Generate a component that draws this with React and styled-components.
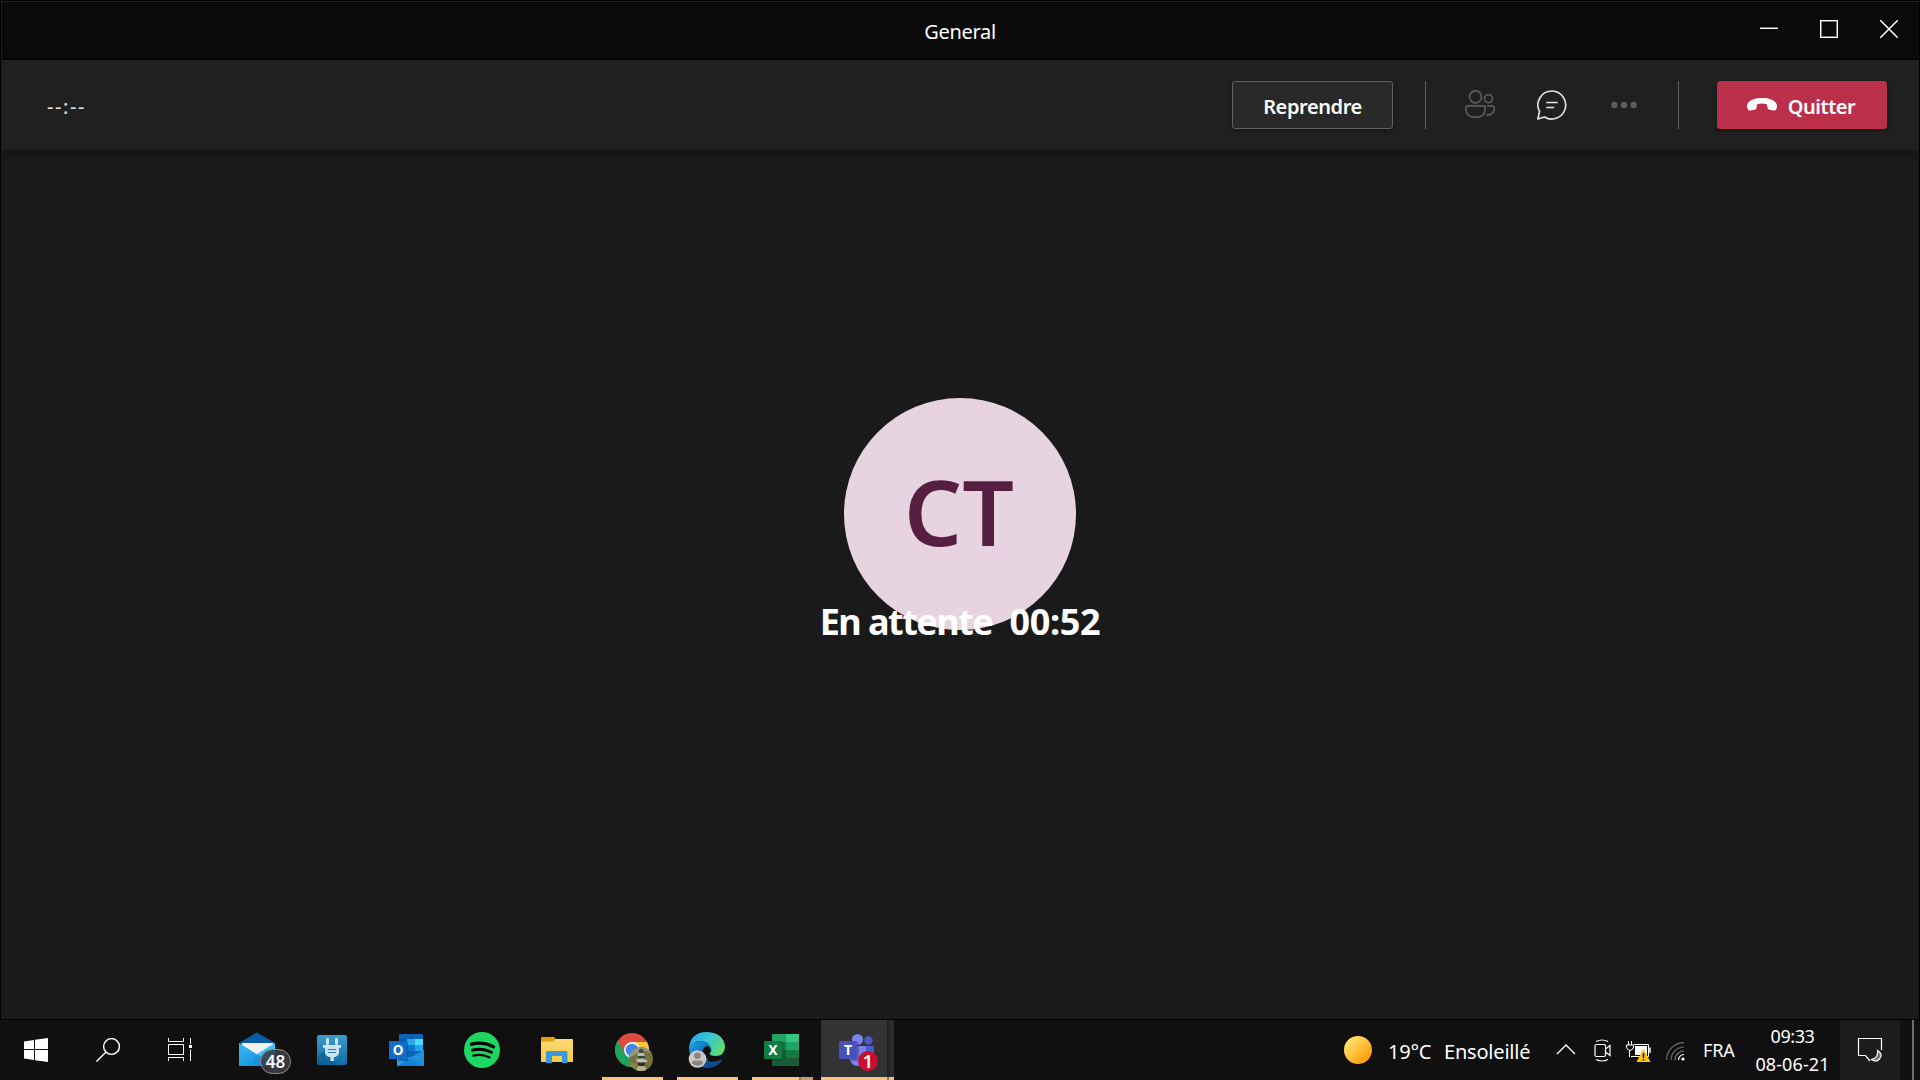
import React from "react";
import styled, { createGlobalStyle, css } from "styled-components";

const Global = createGlobalStyle`
  * { box-sizing: border-box; }
  html, body { margin: 0; background: #101010; overflow: hidden; }
  body { font-family: "Noto Sans", "Open Sans", sans-serif; color: #fff; }
  svg { display: block; flex: none; }
`;

const Desktop = styled.div`
  width: 1920px;
  height: 1080px;
  display: flex;
  flex-direction: column;
  overflow: hidden;
`;

const Window = styled.div`
  height: 1020px;
  display: flex;
  flex-direction: column;
  border: 1px solid #000;
  background: #1a1a1a;
`;

const Frame = styled.div`
  flex: 1;
  display: flex;
  flex-direction: column;
  border-top: 1px solid #232323;
  border-left: 1px solid #1c1c1c;
`;

const TitleBar = styled.header`
  height: 58px;
  flex: none;
  display: grid;
  grid-template-columns: 1fr auto 1fr;
  background: #0a0a0a;
  border-bottom: 1px solid #000;
`;

const Label = styled.span`
  display: block;
  white-space: pre;
  font-size: ${(p) => p.$size}px;
  font-weight: ${(p) => p.$weight || 400};
  letter-spacing: ${(p) => p.$track || 0}px;
  line-height: ${(p) => p.$line || 30}px;
  padding-top: ${(p) => p.$drop || 0}px;
  color: ${(p) => p.$color || "#fff"};
`;

const Title = styled.h1`
  grid-column: 2;
  margin: 0;
  padding: 15px 1px 0 0;
  font-weight: 400;
`;

const WindowControls = styled.div`
  display: flex;
  justify-content: flex-end;
`;

const ControlButton = styled.button`
  width: 60px;
  height: 54px;
  padding: 0;
  border: 0;
  background: none;
  color: #fff;
  display: flex;
  align-items: center;
  justify-content: center;
`;

const CallToolbar = styled.div`
  height: 90px;
  flex: none;
  display: flex;
  align-items: center;
  justify-content: space-between;
  padding: 0 32px 0 45px;
  background: #202020;
  box-shadow: 0 3px 8px rgba(0, 0, 0, 0.22);
`;

const Actions = styled.div`
  display: flex;
  align-items: center;
`;

const CallButton = styled.button`
  height: 48px;
  width: ${(p) => p.$width}px;
  display: flex;
  align-items: center;
  justify-content: center;
  gap: 11px;
  padding: 0;
  font-family: inherit;
  border-radius: 3px;
  border: 1px solid #616161;
  background: #292929;
  box-shadow: 0 2px 5px rgba(0, 0, 0, 0.35);
  ${(p) =>
    p.$danger &&
    css`
      padding-right: 2px;
      border-color: #bc2f4b;
      background: #bc2f4b;
    `}
`;

const Divider = styled.i`
  width: 1px;
  height: 48px;
  background: #616161;
  margin: 0 ${(p) => p.$after}px 0 ${(p) => p.$before}px;
`;

const IconButton = styled.button`
  width: 72px;
  height: 48px;
  padding: 0;
  border: 0;
  background: none;
  display: flex;
  align-items: center;
  justify-content: center;
  color: ${(p) => (p.$active ? "#e2e2e2" : "#5c5c5c")};
`;

const Stage = styled.main`
  flex: 1;
  display: flex;
  flex-direction: column;
  align-items: center;
  padding: 248px 1px 0 0;
`;

const Avatar = styled.div`
  width: 232px;
  height: 232px;
  border-radius: 50%;
  background: #e8d4e0;
  display: flex;
  align-items: center;
  justify-content: center;
  padding: 0 2px 6px 0;
`;

const HoldStatus = styled.div`
  display: flex;
  gap: 17px;
  margin-top: -33px;
`;

const Taskbar = styled.footer`
  height: 60px;
  display: flex;
  background: #101010;
`;

const SystemButtons = styled.div`
  display: flex;
  margin-right: 4px;
`;

const SystemButton = styled.button`
  width: 72px;
  height: 60px;
  padding: 0;
  border: 0;
  background: none;
  display: flex;
  align-items: center;
  justify-content: center;
`;

const Apps = styled.div`
  display: flex;
  flex: 1;
`;

const AppCell = styled.div`
  position: relative;
  width: 75px;
  height: 60px;
`;

const AppFace = styled.div`
  height: 60px;
  margin: 0 ${(p) => (p.$active ? 1 : 0)}px;
  background: ${(p) => (p.$active ? "linear-gradient(90deg,#333 66px,#202020 66px 68px,#2b2b2b 68px)" : "none")};
`;

const AppSvg = styled.svg`
  margin-left: ${(p) => (p.$active ? -1 : 0)}px;
`;

const Underline = styled.i`
  position: absolute;
  bottom: 0;
  left: ${(p) => (p.$active ? 1 : 7)}px;
  right: ${(p) => (p.$active ? 1 : 7)}px;
  height: 3px;
  background: ${(p) =>
    p.$stack
      ? `linear-gradient(90deg,#fcc37f ${p.$stack}px,#977650 ${p.$stack}px ${p.$stack + 2}px,${p.$active ? "#f3bd7b" : "#c99c67"} ${p.$stack + 2}px)`
      : "#fcc37f"};
`;

const Badge = styled.span`
  position: absolute;
  left: ${(p) => p.$x}px;
  top: ${(p) => p.$y}px;
  width: ${(p) => p.$w}px;
  height: ${(p) => p.$h}px;
  border-radius: 13px;
  display: flex;
  align-items: center;
  justify-content: center;
  background: ${(p) => p.$bg};
  border: ${(p) => (p.$ring ? "1px solid #8d8d8d" : "0")};
`;

const Tray = styled.div`
  display: flex;
  height: 60px;
`;

const TrayItem = styled.div`
  width: ${(p) => p.$width}px;
  padding-top: ${(p) => p.$top || 0}px;
  flex: none;
`;

const Clock = styled.div`
  width: 97px;
  display: flex;
  flex-direction: column;
  align-items: center;
  padding: 3px 0 0 2px;
`;

const Notifications = styled.div`
  width: 60px;
  background: #1c1c1c;
  padding: 17px 0 0 17px;
`;

const ShowDesktop = styled.div`
  width: 20px;
  padding-left: 12px;
  &::before {
    content: "";
    display: block;
    width: 2px;
    height: 60px;
    background: #6e6e6e;
  }
`;

const MailIcon = () => (
  <>
    <defs>
      <linearGradient id="mailBody" x1="0" y1="0" x2="1" y2="1">
        <stop offset="0" stopColor="#35bdf1" />
        <stop offset="1" stopColor="#1482dc" />
      </linearGradient>
    </defs>
    <path d="M19 23 37 12.5 55 23V30H19Z" fill="#0c5ca8" />
    <path d="M22 23H53V35L37 42 22 33Z" fill="#f1f1f1" />
    <path d="M37 34 55 23V46H40Z" fill="#37c6f5" />
    <path d="M19 23 55 46H19Z" fill="url(#mailBody)" />
    <path d="M37 34.5 55 46H30Z" fill="#1792e2" />
  </>
);

const PlugIcon = () => (
  <>
    <defs>
      <linearGradient id="plugBg" x1="0" y1="0" x2="0" y2="1">
        <stop offset="0" stopColor="#3c9ccb" />
        <stop offset="1" stopColor="#0e6ca6" />
      </linearGradient>
    </defs>
    <rect x="22" y="15" width="30" height="30" rx="2" fill="url(#plugBg)" />
    <path d="M30 30 22 37V43Q22 45 24 45H41L37 38Z" fill="#0a5589" opacity=".5" />
    <g fill="#c9e3f1">
      <rect x="31" y="18" width="3" height="7" rx="1.3" />
      <rect x="40" y="18" width="3" height="7" rx="1.3" />
      <path d="M28 25H46V28H44V32Q44 36 40 37H38.800V41H35.400V37H34Q30 36 30 32V28H28Z" />
    </g>
    <path d="M33 29.500H41M33 32.500H41" stroke="#2c83b6" strokeWidth="1.200" />
  </>
);

const OutlookIcon = () => (
  <>
    <rect x="29" y="14" width="24" height="24" rx="1" fill="#0a64b4" />
    <rect x="29" y="19" width="8" height="12" fill="#0f5aa5" />
    <rect x="37" y="19" width="8" height="6" fill="#28a8ea" />
    <rect x="45" y="19" width="8" height="6" fill="#50d9ff" />
    <rect x="37" y="25" width="8" height="6" fill="#0c78d0" />
    <rect x="45" y="25" width="8" height="6" fill="#22a2e8" />
    <path d="M27 31 54 46H28Q27 46 27 45Z" fill="#2a9de6" />
    <path d="M54 30V45Q54 46 53 46H28L35 41Z" fill="#1680d6" />
    <path d="M54 30V45L53 46 39 38Z" fill="#1f8fe0" />
    <path d="M28 21H36Q38 21 38 23V41H28Z" fill="#083b70" opacity=".5" />
    <rect x="19" y="21" width="18" height="18" rx="1" fill="#0f6ccb" />
    <text x="28" y="34.700" textAnchor="middle" fontSize="13.500" fontWeight="700" fill="#fff">O</text>
  </>
);

const SpotifyIcon = () => (
  <>
    <circle cx="37" cy="30" r="18" fill="#1ed760" />
    <g fill="none" stroke="#000" strokeLinecap="round">
      <path d="M26.500 24.200Q38 21.200 48.500 26.800" strokeWidth="3.400" />
      <path d="M27.500 30.200Q37.500 27.500 46.500 32.300" strokeWidth="2.800" />
      <path d="M28.300 35.600Q37 33.500 44.500 37.400" strokeWidth="2.200" />
    </g>
  </>
);

const FolderIcon = () => (
  <>
    <defs>
      <linearGradient id="folderFront" x1="0" y1="0" x2="0" y2="1">
        <stop offset="0" stopColor="#ffdb78" />
        <stop offset="1" stopColor="#fbc83f" />
      </linearGradient>
    </defs>
    <path d="M21 17.800Q21 17 22 17H34L36 19V22H21Z" fill="#e0a009" />
    <path d="M21 21.500H33L36 19H52Q53 19 53 20V42H21Z" fill="url(#folderFront)" />
    <path d="M26 43V32.500Q26 31 27.500 31H46Q47.500 31 47.500 32.500V43H42V36H32V43Z" fill="#3b97de" />
  </>
);

const ChromeIcon = () => (
  <>
    <defs>
      <clipPath id="chromeClip"><circle cx="37" cy="30" r="17" /></clipPath>
      <clipPath id="profileClip"><circle cx="46" cy="39" r="12" /></clipPath>
    </defs>
    <g clipPath="url(#chromeClip)">
      <rect x="20" y="13" width="34" height="34" fill="#db4b3f" />
      <path d="M37 22H54V47H36L44 34Z" fill="#fdc73a" />
      <path d="M20 18 23 21 30 34 38 38 36 47H20Z" fill="#1ca45c" />
      <circle cx="37" cy="30" r="8" fill="#f3f3f3" />
      <circle cx="37" cy="30" r="6.300" fill="#4285f4" />
    </g>
    <g clipPath="url(#profileClip)">
      <rect x="34" y="27" width="24" height="24" fill="#77703f" />
      <path d="M34 27H58V33L50 31 41 34 34 38Z" fill="#99977c" />
      <path d="M34 42 42 44 40 51H34Z" fill="#8e8747" />
      <path d="M44 29.500Q46.500 28 48.500 30V33H44Z" fill="#4a4a3a" />
      <path d="M43 33H49L50 38 48 43H43.500L42 38Z" fill="#b4bfae" />
      <path d="M42.500 36H50V38.500H42.500Z" fill="#2d4636" />
      <path d="M40 40 47 39 52.500 40.500 52 42 44 42.500Z" fill="#c2c3b2" />
      <path d="M43 42.500H50L49.500 46H43.500Z" fill="#262b26" />
      <path d="M43 46H50L51.500 51H41Z" fill="#b9b38c" />
    </g>
  </>
);

const EdgeIcon = () => (
  <>
    <defs>
      <linearGradient id="edgeTop" x1="0" y1=".2" x2="1" y2=".6">
        <stop offset="0" stopColor="#2aa7e8" />
        <stop offset=".5" stopColor="#35c5d6" />
        <stop offset="1" stopColor="#5fe066" />
      </linearGradient>
      <linearGradient id="edgeBase" x1="0" y1="0" x2="1" y2="1">
        <stop offset="0" stopColor="#1ba0e6" />
        <stop offset="1" stopColor="#0b559f" />
      </linearGradient>
    </defs>
    <path d="M19 28Q22 21 30 21Q39 22 41 28L38 39 37 48Q20 46 19 28Z" fill="url(#edgeBase)" />
    <path d="M31 29Q29 39 40 41.500Q47 42.500 53 38.500Q48 48 37 48Q27 45 27 37Q27.500 31 31 29Z" fill="#104e91" />
    <path d="M32.500 31Q33.500 26.500 38 26Q42 28 39.500 33.500L46 37 53 37 52 39Q45 42 38 39Q31 36 32.500 31Z" fill="#101010" />
    <path d="M19 29Q20 12 37 12Q54 13 55 27Q54 36 46 36Q40 36 39.500 33.500Q42.500 31 40.500 27Q37 20 28 21Q22 22 19 29Z" fill="url(#edgeTop)" />
    <circle cx="27.500" cy="39" r="8.800" fill="#cbc8c5" />
    <circle cx="27.500" cy="35.800" r="3.300" fill="#8a8683" />
    <path d="M21.800 43Q22 40.500 24 40.500H31Q33 40.500 33.200 43Q31 46 27.500 46Q24 46 21.800 43Z" fill="#8a8683" />
  </>
);

const ExcelIcon = () => (
  <>
    <rect x="27" y="14" width="27" height="32" rx="1" fill="#21a366" />
    <rect x="41" y="14" width="13" height="8" fill="#33c481" />
    <rect x="27" y="22" width="14" height="8" fill="#107c41" />
    <rect x="27" y="30" width="14" height="8" fill="#185c37" />
    <rect x="41" y="30" width="13" height="8" fill="#107c41" />
    <rect x="27" y="38" width="27" height="8" fill="#1a5c38" />
    <path d="M27 21H37Q38 21 38 22.500V41H27Z" fill="#0b3f22" opacity=".4" />
    <rect x="19" y="21" width="18" height="18" rx="1" fill="#0f7c41" />
    <text x="28" y="35" textAnchor="middle" fontSize="14" fontWeight="700" fill="#fff">X</text>
  </>
);

const TeamsIcon = () => (
  <>
    <circle cx="48.500" cy="20.500" r="4.200" fill="#5059c9" />
    <path d="M43 26H54V37Q54 41 48 41Z" fill="#5059c9" />
    <circle cx="37.500" cy="19.500" r="5.600" fill="#7b83eb" />
    <path d="M30 26H46V38Q45 46 38 46Q31 46 30 39Z" fill="#7b83eb" />
    <path d="M31 22H37Q39 22 39 24V41H31Z" fill="#32388f" opacity=".45" />
    <rect x="19" y="21" width="18" height="18" rx="1" fill="#4950ba" />
    <text x="28" y="35" textAnchor="middle" fontSize="14" fontWeight="700" fill="#fff">T</text>
  </>
);

const apps = [
  { id: "mail", Icon: MailIcon, badge: { x: 40, y: 29, w: 31, h: 25, bg: "rgba(58,62,66,.88)", ring: true, text: "48", size: 17 } },
  { id: "power", Icon: PlugIcon },
  { id: "outlook", Icon: OutlookIcon },
  { id: "spotify", Icon: SpotifyIcon },
  { id: "explorer", Icon: FolderIcon },
  { id: "chrome", Icon: ChromeIcon, open: true },
  { id: "edge", Icon: EdgeIcon, open: true },
  { id: "excel", Icon: ExcelIcon, open: true, stack: 47 },
  { id: "teams", Icon: TeamsIcon, open: true, active: true, stack: 66, badge: { x: 38, y: 31, w: 20, h: 20, bg: "#c8102e", text: "1", size: 18 } },
];

const AppButton = ({ Icon, open, active, stack, badge }) => (
  <AppCell>
    <AppFace $active={active}>
      <AppSvg $active={active} width="75" height="60" viewBox="0 0 75 60">
        <Icon />
      </AppSvg>
    </AppFace>
    {badge && (
      <Badge $x={badge.x} $y={badge.y} $w={badge.w} $h={badge.h} $bg={badge.bg} $ring={badge.ring}>
        <Label $size={badge.size} $weight={600} $line={20}>{badge.text}</Label>
      </Badge>
    )}
    {open && <Underline $active={active} $stack={stack} />}
  </AppCell>
);

export default function App() {
  return (
    <Desktop>
      <Global />
      <Window>
        <Frame>
          <TitleBar>
            <Title><Label $size={20} $track={-0.3}>General</Label></Title>
            <WindowControls>
              <ControlButton aria-label="Réduire">
                <svg width="18" height="18"><path d="M0 7.500H18" stroke="#777" /><path d="M0 8.500H18" stroke="#fff" /></svg>
              </ControlButton>
              <ControlButton aria-label="Agrandir">
                <svg width="18" height="18" fill="none"><rect x=".5" y=".5" width="17" height="17" stroke="#fff" /><rect x="1.500" y="1.500" width="15" height="15" stroke="#777" /></svg>
              </ControlButton>
              <ControlButton aria-label="Fermer">
                <svg width="18" height="18"><path d="M0 0 18 18M18 0 0 18" stroke="#fff" strokeWidth="1.500" /></svg>
              </ControlButton>
            </WindowControls>
          </TitleBar>

          <CallToolbar>
            <Label $size={20} $color="#e0e0e0" $track={1.6} $drop={4}>--:--</Label>
            <Actions>
              <CallButton $width={161}>
                <Label $size={20} $weight={600} $track={-0.4} $drop={4}>Reprendre</Label>
              </CallButton>
              <Divider $before={32} $after={18} />
              <IconButton aria-label="Participants">
                <svg width="30" height="30" viewBox="0 .7 30 30" fill="none" stroke="currentColor" strokeWidth="1.700">
                  <circle cx="10.500" cy="7.500" r="6" />
                  <circle cx="23.500" cy="9.300" r="4" />
                  <path d="M3.500 16.500H18Q20.200 16.500 20.200 18.700V20Q20 28 10.500 28Q1 28 .9 20V18.700Q.9 16.500 3.500 16.500Z" />
                  <path d="M22 16.500H27Q29.200 16.500 29.200 18.700Q29.200 26 21.500 25.800" />
                </svg>
              </IconButton>
              <IconButton $active aria-label="Conversation">
                <svg width="32" height="32" viewBox="0 0 32 32" fill="none" stroke="currentColor" strokeWidth="1.700" strokeLinejoin="round" strokeLinecap="round">
                  <path d="M16 2A14 14 0 1 1 8.500 28L1.800 30L3.500 22.500A14 14 0 0 1 16 2Z" />
                  <path d="M11 13.500H21M11 18.500H17.500" />
                </svg>
              </IconButton>
              <IconButton aria-label="Autres actions">
                <svg width="28" height="28" fill="currentColor"><circle cx="4.300" cy="14" r="3.200" /><circle cx="14" cy="14" r="3.200" /><circle cx="23.700" cy="14" r="3.200" /></svg>
              </IconButton>
              <Divider $before={18} $after={38} />
              <CallButton $width={170} $danger>
                <svg width="30" height="15" viewBox="0 0 30 15" fill="#fff">
                  <path d="M15 0C22 0 27 2 29 5Q31 8 29.300 11Q28.500 12.800 26.500 12.500L22.500 11.800Q20.800 11.500 20.500 9.700L20 6.500Q15 4.500 10 6.500L9.500 9.700Q9.200 11.500 7.500 11.800L3.500 12.500Q1.500 12.800.7 11Q-1 8 1 5C3 2 8 0 15 0Z" />
                </svg>
                <Label $size={20} $weight={600} $track={-0.5} $drop={4}>Quitter</Label>
              </CallButton>
            </Actions>
          </CallToolbar>

          <Stage>
            <Avatar>
              <Label $size={91} $weight={600} $line={120} $color="#561e40">CT</Label>
            </Avatar>
            <HoldStatus>
              <Label $size={36} $weight={700} $line={50} $track={-1.5}>En attente</Label>
              <Label $size={36} $weight={700} $line={50} $track={-0.3}>00:52</Label>
            </HoldStatus>
          </Stage>
        </Frame>
      </Window>

      <Taskbar>
        <SystemButtons>
          <SystemButton aria-label="Démarrer">
            <svg width="24" height="24" fill="#fff"><path d="M0 3.400 10 2V11H0ZM11 1.800 24 0V11H11ZM0 12H10V22L0 20.600ZM11 12H24V24L11 22.200Z" /></svg>
          </SystemButton>
          <SystemButton aria-label="Rechercher">
            <svg width="24" height="24" fill="none" stroke="#fff" strokeWidth="1.400"><circle cx="15.500" cy="8.500" r="7.900" /><path d="M9.800 14.200.4 23.600" /></svg>
          </SystemButton>
          <SystemButton aria-label="Affichage des tâches">
            <svg width="24" height="24" fill="none" stroke="#fff"><path d="M.5 0V3.500H15.500V0M.5 6.500H15.500V16.500H.5ZM.5 23V19.500H15.500V23M22.500 0V6M22.500 11.500V23" /><rect x="21" y="7" width="3" height="3" fill="#fff" stroke="none" /></svg>
          </SystemButton>
        </SystemButtons>
        <Apps>{apps.map((a) => <AppButton key={a.id} {...a} />)}</Apps>
        <Tray>
          <TrayItem $width={44} $top={16}>
            <svg width="28" height="28">
              <defs><linearGradient id="sun" x1=".1" y1=".1" x2=".9" y2=".9"><stop offset="0" stopColor="#ffe873" /><stop offset="1" stopColor="#ff9800" /></linearGradient></defs>
              <circle cx="14" cy="14" r="14" fill="url(#sun)" />
            </svg>
          </TrayItem>
          <TrayItem $width={56} $top={17}><Label $size={20} $track={-0.2}>19°C</Label></TrayItem>
          <TrayItem $width={112} $top={17}><Label $size={20} $track={-0.2}>Ensoleillé</Label></TrayItem>
          <TrayItem $width={38} $top={24}>
            <svg width="20" height="11" fill="none" stroke="#fff" strokeWidth="1.400"><path d="M1 10 10 1 19 10" /></svg>
          </TrayItem>
          <TrayItem $width={32} $top={19}>
            <svg width="18" height="23" fill="none" stroke="#fff" strokeWidth="1.200"><rect x="1" y="5.500" width="10.500" height="12" rx="1.500" /><path d="M11.500 10 16 6.500V16.500L11.500 13M2 2.500Q8 -.5 14 2.500M2 20.500Q8 23.500 14 20.500" /></svg>
          </TrayItem>
          <TrayItem $width={40} $top={21}>
            <svg width="26" height="22">
              <path d="M8 3.500H22.500V15.500H5" fill="none" stroke="#fff" />
              <rect x="9" y="5" width="12" height="9" fill="#fff" />
              <path d="M24 6.500V12" stroke="#fff" strokeWidth="1.500" />
              <path d="M3.500 9V16" stroke="#fff" />
              <path d="M2.500 0V4M5.500 0V4M.5 4H7.500V6Q7 9 4 9.500Q1 9 .5 6Z" fill="#101010" stroke="#fff" />
              <path d="M17.500 7.500 24.500 21H10.500Z" fill="#fcc00f" />
              <path d="M17.500 12V17M17.500 18.200V19.800" stroke="#201a00" strokeWidth="1.500" />
            </svg>
          </TrayItem>
          <TrayItem $width={37} $top={22}>
            <svg width="19" height="19" fill="none" strokeWidth="1.200">
              <path d="M.6 18A17.400 17.400 0 0 1 18 .6M5 18A13 13 0 0 1 18 5" stroke="#6d6d6d" />
              <path d="M9 18A9 9 0 0 1 18 9" stroke="#8a8a8a" />
              <path d="M12.500 18A5.500 5.500 0 0 1 18 12.500" stroke="#fff" />
              <circle cx="17" cy="17" r="1.600" fill="#fff" />
            </svg>
          </TrayItem>
          <TrayItem $width={40} $top={15}><Label $size={18} $track={-0.1}>FRA</Label></TrayItem>
          <Clock>
            <Label $size={18} $line={27} $track={-0.4}>09:33</Label>
            <Label $size={18} $line={28} $track={0.1}>08-06-21</Label>
          </Clock>
          <Notifications>
            <svg width="27" height="26" fill="none" stroke="#fff" strokeWidth="1.200">
              <path d="M13 24 8.500 18.500H1.500V1.500H24.500V13" />
              <path d="M20.500 13.500Q26.500 17 22.500 22Q19 26 14.500 22.500Q21.500 21 20.500 13.500Z" fill="#777" />
            </svg>
          </Notifications>
          <ShowDesktop />
        </Tray>
      </Taskbar>
    </Desktop>
  );
}
